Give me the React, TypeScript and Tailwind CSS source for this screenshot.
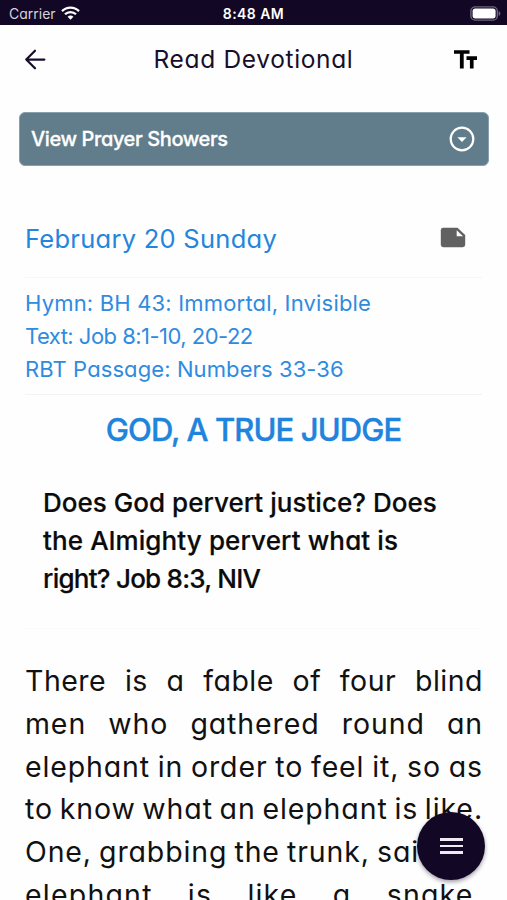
const bodyLines = [
  { text: "There is a fable of four blind", style: "tracking-[0.5px] [text-align-last:justify] [word-spacing:-3.5px]" },
  { text: "men who gathered round an", style: "tracking-[0.9px] [text-align-last:justify] [word-spacing:-3.5px]" },
  { text: "elephant in order to feel it, so as", style: "tracking-[0.85px] [text-align-last:justify] [word-spacing:-3.5px]" },
  { text: "to know what an elephant is like.", style: "tracking-[0.9px] [text-align-last:justify] [word-spacing:-3.5px]" },
  { text: "One, grabbing the trunk, said", style: "tracking-[0.85px] [text-align-last:left] [word-spacing:-1.6px]" },
  { text: "elephant is like a snake.", style: "tracking-[1.2px] [text-align-last:justify] [word-spacing:-3.5px]" },
];

function StatusBar() {
  return (
    <div className="grid h-[25px] grid-cols-3 items-center bg-[#120725] text-[14px] text-white">
      <div className="flex items-center gap-[5px] pt-[3px] pl-[9px] leading-5">
        <span className="text-[#d6d3dc]">Carrier</span>
        <svg className="-mt-[2px]" width="19" height="14" viewBox="0 0 19 14" fill="none" stroke="white" strokeWidth="2.3">
          <path d="M1 5.1C5.8 .4 13.2 .4 18 5.1" />
          <path d="M4 8.3C7 5.3 12 5.3 15 8.3" />
          <path d="M6.6 10.7C8.2 9.2 10.8 9.2 12.4 10.7L9.5 13.7Z" fill="white" stroke="none" />
        </svg>
      </div>
      <div className="pt-[3px] text-center leading-5 font-semibold tracking-[0.45px]">8:48 AM</div>
      <div className="flex justify-end pt-[1px] pr-[6px]">
        <svg width="31" height="15" viewBox="0 0 31 15">
          <rect x=".9" y=".9" width="26.4" height="13.2" rx="4.2" fill="none" stroke="#6c657a" strokeWidth="1.4" />
          <rect x="2.6" y="2.6" width="23" height="9.8" rx="2.6" fill="white" />
          <path d="M28.6 5C31 6 31 9 28.6 10Z" fill="#6c657a" />
        </svg>
      </div>
    </div>
  );
}

function Header() {
  return (
    <header className="flex h-[69px] items-center justify-between pr-[27px] pl-[21px] text-[#170e2b]">
      <svg width="28" height="28" viewBox="0 0 24 24" fill="none" stroke="currentColor" strokeWidth="1.9" strokeLinecap="round" strokeLinejoin="round">
        <path d="M20 11.6H4.8M12 4.1 4.5 11.6 12 19.1" />
      </svg>
      <h1 className="pb-[2px] pl-[6px] text-[24.5px] leading-8 tracking-[0.65px]">Read Devotional</h1>
      <svg width="28" height="28" viewBox="0 0 28 28" fill="black">
        <path d="M2 4.2H17.5V7.8H11.7V22.4H7.9V7.8H2Z" />
        <path d="M14.5 10.3H25V13.9H21.6V22.4H17.9V13.9H14.5Z" />
      </svg>
    </header>
  );
}

export default function App() {
  return (
    <div className="relative h-[900px] w-full overflow-hidden bg-[#fefefe] font-['Inter',sans-serif] whitespace-nowrap [font-feature-settings:'cv11']">
      <StatusBar />
      <Header />
      <main>
        <button className="mt-[18px] ml-[19px] flex h-[54px] w-[470px] items-center justify-between rounded-[6px] border border-[#86a0ad] bg-[#617d8b] pr-[11px] pl-[11px] text-white">
          <span className="text-[20px] leading-7 font-medium tracking-[-0.4px] [-webkit-text-stroke:0.3px_white]">View Prayer Showers</span>
          <svg width="30" height="30" viewBox="0 0 30 30">
            <circle cx="15" cy="15" r="11.3" fill="none" stroke="white" strokeWidth="2.2" />
            <path d="M10.4 13.2H19.6L15 17.9Z" fill="white" />
          </svg>
        </button>

        <div className="mr-[25px] ml-[25px]">
          <section className="mt-[54px] flex h-[58px] items-start justify-between border-b border-[#f6f6f6] pt-[2px] pr-[16px] text-[#2485dc]">
            <h2 className="text-[25.5px] leading-[33px] tracking-[0.27px]">February 20 Sunday</h2>
            <svg className="mt-[5px]" width="26" height="21" viewBox="0 0 26 21">
              <path d="M3.2 .8H17.5L25.2 8V17.8Q25.2 20.2 22.8 20.2H3.2Q.8 20.2 .8 17.8V3.2Q.8 .8 3.2 .8Z" fill="#616161" />
              <path d="M16.7 3.3V9.3H23Z" fill="#fefefe" />
            </svg>
          </section>
          <section className="h-[117px] border-b border-[#f3f3f3] pt-[9px] text-[22px] leading-[33px] text-[#2f8bde]">
            <p className="tracking-[0.18px]">Hymn: BH 43: Immortal, Invisible</p>
            <p className="tracking-[-0.52px]">Text: Job 8:1-10, 20-22</p>
            <p className="tracking-[0.1px]">RBT Passage: Numbers 33-36</p>
          </section>
          <h2 className="mt-[14px] text-center text-[31px] leading-[42px] font-medium tracking-[-0.9px] text-[#2083dc] [-webkit-text-stroke:0.4px_#2083dc]">GOD, A TRUE JUDGE</h2>
          <section className="mt-[33px] h-[145px] border-b border-[#fafafa] pl-[18px] text-[26px] leading-[38px] font-medium text-[#0b0b0b] [-webkit-text-stroke:0.2px_#0b0b0b]">
            <p className="tracking-[0.03px]">Does God pervert justice? Does</p>
            <p className="tracking-[0.12px]">the Almighty pervert what is</p>
            <p className="tracking-[-0.75px]">right? Job 8:3, NIV</p>
          </section>
          <section className="mt-[31px] -mr-[1px] text-[28.5px] leading-[42.8px] text-[#111111]">
            {bodyLines.map((line) => (
              <p key={line.text} className={line.style}>{line.text}</p>
            ))}
          </section>
        </div>
      </main>
      <button className="absolute top-[812px] left-[417px] flex size-[68px] items-center justify-center rounded-full bg-[#120725] shadow-[0_2px_4px_rgba(18,7,37,0.4)]">
        <span className="flex w-[23px] flex-col gap-[4px]">
          <span className="h-[2.5px] bg-[#eeeaf3]" />
          <span className="h-[2.5px] bg-[#eeeaf3]" />
          <span className="h-[2.5px] bg-[#eeeaf3]" />
        </span>
      </button>
    </div>
  );
}
